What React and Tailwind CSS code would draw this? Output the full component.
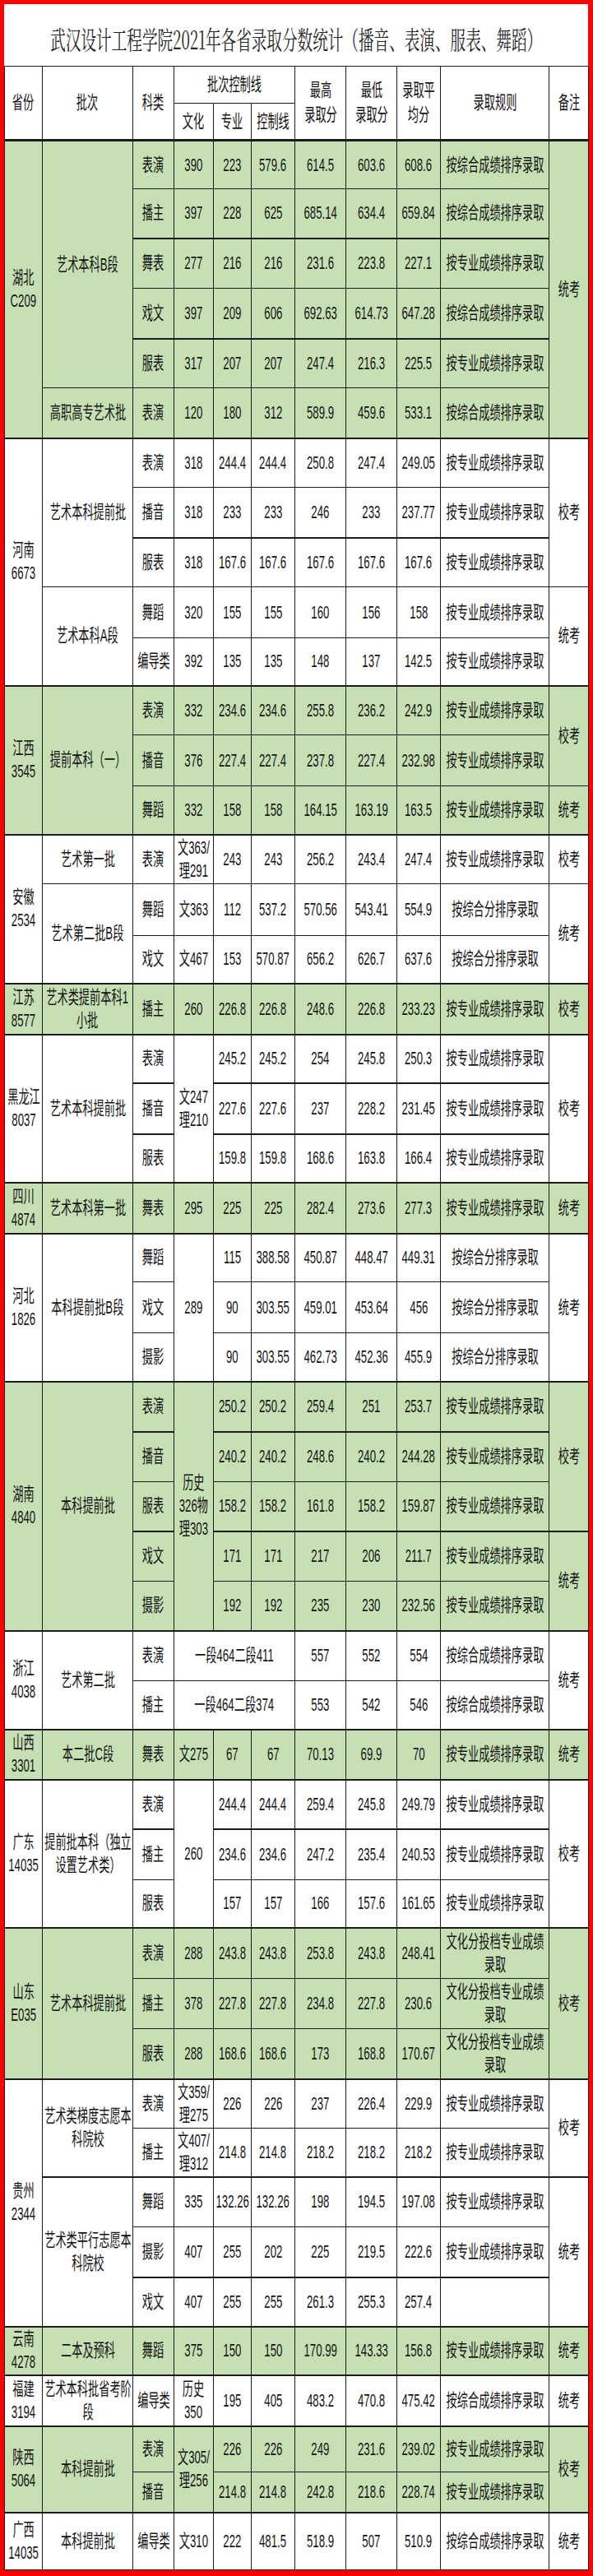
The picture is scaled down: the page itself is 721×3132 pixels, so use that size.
import React from 'react';

const FONT = "font-['Liberation_Sans','Noto_Sans_CJK_SC',sans-serif]";
const GREEN = 'bg-[#c6e0b4]';

const COLS = ['w-[46px]', 'w-[110px]', 'w-[50px]', 'w-[48px]', 'w-[46px]', 'w-[53px]', 'w-[62px]', 'w-[62px]', 'w-[53px]', 'w-[132px]', 'w-[48px]'];

// h = row height, g = green band, t = heavy top rule
// cell: 'text' or [text, rowSpan, colSpan]
const rows = [
  // ── 湖北 ──
  { h: 'h-[59px]', g: 1, t: 1, c: [['湖北\nC209', 6], ['艺术本科B段', 5], '表演', '390', '223', '579.6', '614.5', '603.6', '608.6', '按综合成绩排序录取', ['统考', 6]] },
  { h: 'h-[60px]', g: 1, c: ['播主', '397', '228', '625', '685.14', '634.4', '659.84', '按综合成绩排序录取'] },
  { h: 'h-[61px]', g: 1, t: 1, c: ['舞表', '277', '216', '216', '231.6', '223.8', '227.1', '按专业成绩排序录取'] },
  { h: 'h-[61px]', g: 1, c: ['戏文', '397', '209', '606', '692.63', '614.73', '647.28', '按综合成绩排序录取'] },
  { h: 'h-[60px]', g: 1, t: 1, c: ['服表', '317', '207', '207', '247.4', '216.3', '225.5', '按专业成绩排序录取'] },
  { h: 'h-[61px]', g: 1, c: ['高职高专艺术批', '表演', '120', '180', '312', '589.9', '459.6', '533.1', '按综合成绩排序录取'] },
  // ── 河南 ──
  { h: 'h-[60px]', t: 1, c: [['河南\n6673', 5], ['艺术本科提前批', 3], '表演', '318', '244.4', '244.4', '250.8', '247.4', '249.05', '按专业成绩排序录取', ['校考', 3]] },
  { h: 'h-[61px]', c: ['播音', '318', '233', '233', '246', '233', '237.77', '按专业成绩排序录取'] },
  { h: 'h-[60px]', t: 1, c: ['服表', '318', '167.6', '167.6', '167.6', '167.6', '167.6', '按专业成绩排序录取'] },
  { h: 'h-[62px]', c: [['艺术本科A段', 2], '舞蹈', '320', '155', '155', '160', '156', '158', '按专业成绩排序录取', ['统考', 2]] },
  { h: 'h-[58px]', c: ['编导类', '392', '135', '135', '148', '137', '142.5', '按专业成绩排序录取'] },
  // ── 江西 ──
  { h: 'h-[60px]', g: 1, t: 1, c: [['江西\n3545', 3], ['提前本科（一）', 3], '表演', '332', '234.6', '234.6', '255.8', '236.2', '242.9', '按专业成绩排序录取', ['校考', 2]] },
  { h: 'h-[62px]', g: 1, c: ['播音', '376', '227.4', '227.4', '237.8', '227.4', '232.98', '按专业成绩排序录取'] },
  { h: 'h-[59px]', g: 1, c: ['舞蹈', '332', '158', '158', '164.15', '163.19', '163.5', '按专业成绩排序录取', '统考'] },
  // ── 安徽 ──
  { h: 'h-[60px]', t: 1, c: [['安徽\n2534', 3], '艺术第一批', '表演', '文363/\n理291', '243', '243', '256.2', '243.4', '247.4', '按专业成绩排序录取', '校考'] },
  { h: 'h-[63px]', c: [['艺术第二批B段', 2], '舞蹈', '文363', '112', '537.2', '570.56', '543.41', '554.9', '按综合分排序录取', ['统考', 2]] },
  { h: 'h-[58px]', c: ['戏文', '文467', '153', '570.87', '656.2', '626.7', '637.6', '按综合分排序录取'] },
  // ── 江苏 ──
  { h: 'h-[62px]', g: 1, t: 1, c: ['江苏\n8577', '艺术类提前本科1\n小批', '播主', '260', '226.8', '226.8', '248.6', '226.8', '233.23', '按专业成绩排序录取', '校考'] },
  // ── 黑龙江 ──
  { h: 'h-[59px]', t: 1, c: [['黑龙江\n8037', 3], ['艺术本科提前批', 3], '表演', ['文247\n理210', 3], '245.2', '245.2', '254', '245.8', '250.3', '按专业成绩排序录取', ['校考', 3]] },
  { h: 'h-[62px]', t: 1, c: ['播音', '227.6', '227.6', '237', '228.2', '231.45', '按专业成绩排序录取'] },
  { h: 'h-[59px]', t: 1, c: ['服表', '159.8', '159.8', '168.6', '163.8', '166.4', '按专业成绩排序录取'] },
  // ── 四川 ──
  { h: 'h-[62px]', g: 1, t: 1, c: ['四川\n4874', '艺术本科第一批', '舞表', '295', '225', '225', '282.4', '273.6', '277.3', '按专业成绩排序录取', '统考'] },
  // ── 河北 ──
  { h: 'h-[59px]', t: 1, c: [['河北\n1826', 3], ['本科提前批B段', 3], '舞蹈', ['289', 3], '115', '388.58', '450.87', '448.47', '449.31', '按综合分排序录取', ['统考', 3]] },
  { h: 'h-[62px]', c: ['戏文', '90', '303.55', '459.01', '453.64', '456', '按综合分排序录取'] },
  { h: 'h-[59px]', c: ['摄影', '90', '303.55', '462.73', '452.36', '455.9', '按综合分排序录取'] },
  // ── 湖南 ──
  { h: 'h-[61px]', g: 1, t: 1, c: [['湖南\n4840', 5], ['本科提前批', 5], '表演', ['历史\n326物\n理303', 5], '250.2', '250.2', '259.4', '251', '253.7', '按专业成绩排序录取', ['校考', 3]] },
  { h: 'h-[61px]', g: 1, t: 1, c: ['播音', '240.2', '240.2', '248.6', '240.2', '244.28', '按专业成绩排序录取'] },
  { h: 'h-[60px]', g: 1, c: ['服表', '158.2', '158.2', '161.8', '158.2', '159.87', '按专业成绩排序录取'] },
  { h: 'h-[61px]', g: 1, t: 1, c: ['戏文', '171', '171', '217', '206', '211.7', '按专业成绩排序录取', ['统考', 2]] },
  { h: 'h-[60px]', g: 1, c: ['摄影', '192', '192', '235', '230', '232.56', '按专业成绩排序录取'] },
  // ── 浙江 ──
  { h: 'h-[61px]', t: 1, c: [['浙江\n4038', 2], ['艺术第二批', 2], '表演', ['一段464二段411', 1, 3], '557', '552', '554', '按综合成绩排序录取', ['统考', 2]] },
  { h: 'h-[59px]', c: ['播主', ['一段464二段374', 1, 3], '553', '542', '546', '按综合成绩排序录取'] },
  // ── 山西 ──
  { h: 'h-[61px]', g: 1, t: 1, c: ['山西\n3301', '本二批C段', '舞表', '文275', '67', '67', '70.13', '69.9', '70', '按专业成绩排序录取', '统考'] },
  // ── 广东 ──
  { h: 'h-[60px]', t: 1, c: [['广东\n14035', 3], ['提前批本科（独立\n设置艺术类）', 3], '表演', ['260', 3], '244.4', '244.4', '259.4', '245.8', '249.79', '按专业成绩排序录取', ['校考', 3]] },
  { h: 'h-[62px]', t: 1, c: ['播主', '234.6', '234.6', '247.2', '235.4', '240.53', '按专业成绩排序录取'] },
  { h: 'h-[58px]', c: ['服表', '157', '157', '166', '157.6', '161.65', '按专业成绩排序录取'] },
  // ── 山东 ──
  { h: 'h-[62px]', g: 1, t: 1, c: [['山东\nE035', 3], ['艺术本科提前批', 3], '表演', '288', '243.8', '243.8', '253.8', '243.8', '248.41', '文化分投档专业成绩\n录取', ['校考', 3]] },
  { h: 'h-[61px]', g: 1, c: ['播主', '378', '227.8', '227.8', '234.8', '227.8', '230.6', '文化分投档专业成绩\n录取'] },
  { h: 'h-[61px]', g: 1, c: ['服表', '288', '168.6', '168.6', '173', '168.8', '170.67', '文化分投档专业成绩\n录取'] },
  // ── 贵州 ──
  { h: 'h-[60px]', t: 1, c: [['贵州\n2344', 5], ['艺术类梯度志愿本\n科院校', 2], '表演', '文359/\n理275', '226', '226', '237', '226.4', '229.9', '按专业成绩排序录取', ['校考', 2]] },
  { h: 'h-[59px]', c: ['播主', '文407/\n理312', '214.8', '214.8', '218.2', '218.2', '218.2', '按专业成绩排序录取'] },
  { h: 'h-[61px]', t: 1, c: [['艺术类平行志愿本\n科院校', 3], '舞蹈', '335', '132.26', '132.26', '198', '194.5', '197.08', '按专业成绩排序录取', ['统考', 3]] },
  { h: 'h-[61px]', c: ['摄影', '407', '255', '202', '225', '219.5', '222.6', '按专业成绩排序录取'] },
  { h: 'h-[60px]', t: 1, c: ['戏文', '407', '255', '255', '261.3', '255.3', '257.4', ''] },
  // ── 云南 ──
  { h: 'h-[59px]', g: 1, t: 1, c: ['云南\n4278', '二本及预科', '舞蹈', '375', '150', '150', '170.99', '143.33', '156.8', '按专业成绩排序录取', '统考'] },
  // ── 福建 ──
  { h: 'h-[62px]', t: 1, c: ['福建\n3194', '艺术本科批省考阶\n段', '编导类', '历史\n350', '195', '405', '483.2', '470.8', '475.42', '按综合成绩排序录取', '统考'] },
  // ── 陕西 ──
  { h: 'h-[56px]', g: 1, t: 1, c: [['陕西\n5064', 2], ['本科提前批', 2], '表演', ['文305/\n理256', 2], '226', '226', '249', '231.6', '239.02', '按专业成绩排序录取', ['校考', 2]] },
  { h: 'h-[49px]', g: 1, c: ['播音', '214.8', '214.8', '242.8', '218.6', '228.74', '按专业成绩排序录取'] },
  // ── 广西 ──
  { h: 'h-[70px]', t: 1, c: ['广西\n14035', '本科提前批', '编导类', '文310', '222', '481.5', '518.9', '507', '510.9', '按综合成绩排序录取', '统考'] },
];

const Lines = ({ text }) =>
  text.split('\n').map((l, i) => (
    <React.Fragment key={i}>
      {i > 0 && <br />}
      {l}
    </React.Fragment>
  ));

const Cell = ({ v, extra = '', lead = 'leading-[28px]' }) => {
  const [text, rs = 1, cs = 1] = Array.isArray(v) ? v : [v];
  return (
    <td rowSpan={rs} colSpan={cs} className={`border border-[#1c1c1c] p-0 text-center align-middle ${extra}`}>
      <div className="flex justify-center">
        <span className={`inline-block scale-x-60 whitespace-nowrap text-[22px] text-[#141414] ${lead}`}>
          <Lines text={text} />
        </span>
      </div>
    </td>
  );
};

const App = () => {
  return (
    <div className={`w-[721px] bg-white border-[#ff0000] border-t-[5px] border-l-[5px] border-r-[6px] border-b-[8px] ${FONT}`}>
      {/* ── Title ── */}
      <div className="flex h-[75px] items-center justify-center pt-[9px]">
        <h1 className="inline-block scale-x-60 whitespace-nowrap font-['Noto_Serif_CJK_SC','Noto_Sans_CJK_SC',serif] text-[31px] font-normal text-[#262626]">
          武汉设计工程学院2021年各省录取分数统计（播音、表演、服表、舞蹈）
        </h1>
      </div>

      {/* ── Score table ── */}
      <table className="w-[710px] table-fixed border-collapse">
        <colgroup>
          {COLS.map((w, i) => (
            <col key={i} className={w} />
          ))}
        </colgroup>
        <thead className="bg-white">
          <tr className="h-[45px]">
            <Cell v={['省份', 2]} lead="leading-[30px]" extra="border-b-[3px]" />
            <Cell v={['批次', 2]} lead="leading-[30px]" extra="border-b-[3px]" />
            <Cell v={['科类', 2]} lead="leading-[30px]" extra="border-b-[3px]" />
            <Cell v={['批次控制线', 1, 3]} lead="leading-[30px]" />
            <Cell v={['最高\n录取分', 2]} lead="leading-[30px]" extra="border-b-[3px]" />
            <Cell v={['最低\n录取分', 2]} lead="leading-[30px]" extra="border-b-[3px]" />
            <Cell v={['录取平\n均分', 2]} lead="leading-[30px]" extra="border-b-[3px]" />
            <Cell v={['录取规则', 2]} lead="leading-[30px]" extra="border-b-[3px]" />
            <Cell v={['备注', 2]} lead="leading-[30px]" extra="border-b-[3px]" />
          </tr>
          <tr className="h-[45px]">
            <Cell v="文化" extra="border-b-[3px]" />
            <Cell v="专业" extra="border-b-[3px]" />
            <Cell v="控制线" extra="border-b-[3px]" />
          </tr>
        </thead>
        <tbody>
          {rows.map((r, i) => (
            <tr key={i} className={`${r.h} ${r.g ? GREEN : 'bg-white'}`}>
              {r.c.map((v, j) => (
                <Cell key={j} v={v} extra={r.t ? 'border-t-2' : ''} />
              ))}
            </tr>
          ))}
        </tbody>
      </table>
    </div>
  );
};

export default App;
